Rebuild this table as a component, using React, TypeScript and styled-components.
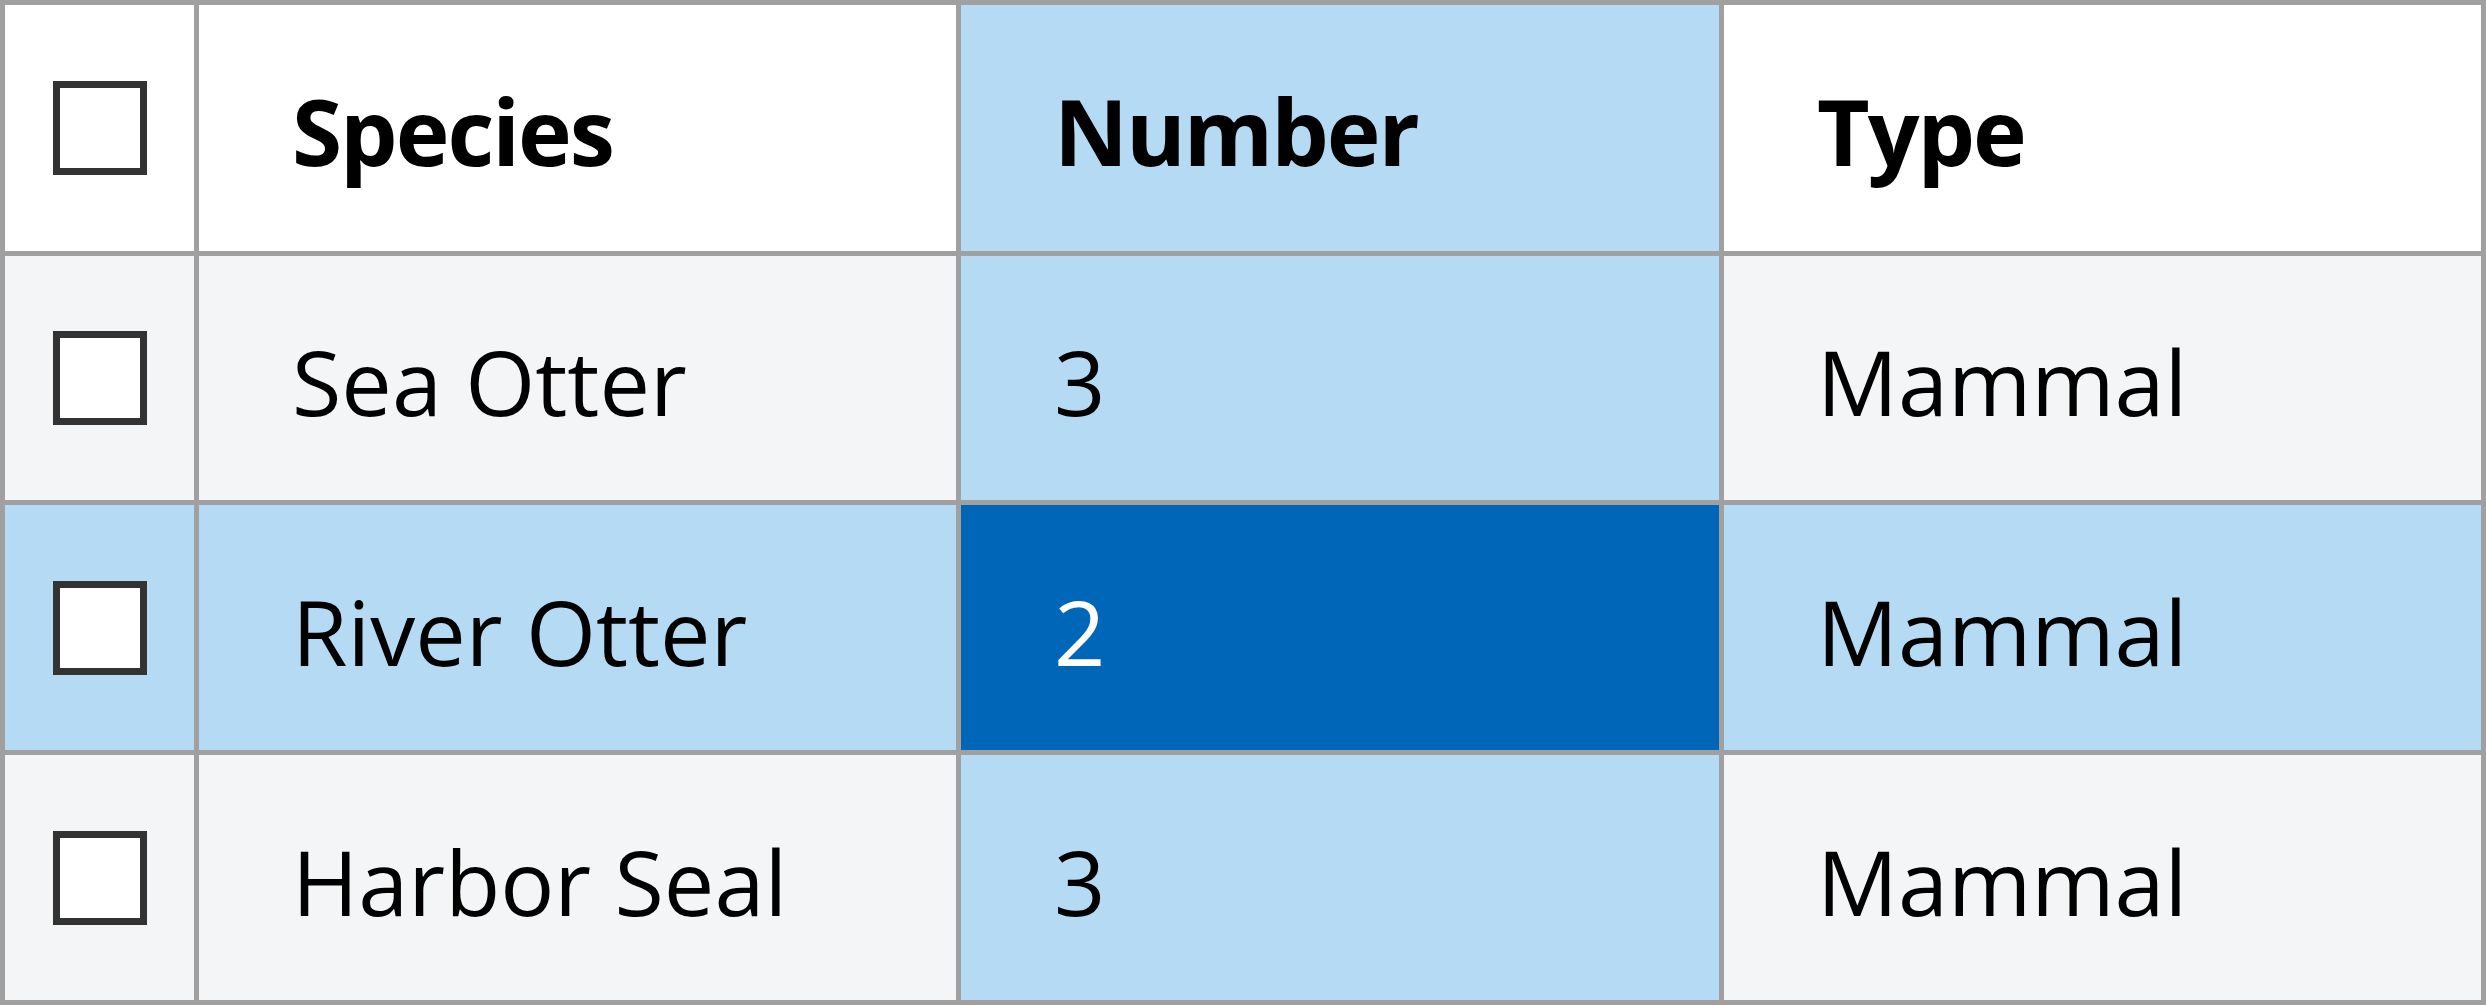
import React from "react";
import styled, { createGlobalStyle } from "styled-components";

const GlobalStyle = createGlobalStyle`
  html, body {
    margin: 0;
    padding: 0;
    background: #ffffff;
  }
  body {
    font-family: "Open Sans", "Noto Sans", "Liberation Sans", sans-serif;
  }
`;

const BORDER = "#a0a0a0";
const ROW_BG = "#f4f5f7";
const SELECT_BG = "#b5daf4";
const ACTIVE_BG = "#0066b8";

const Table = styled.table`
  width: 2486px;
  table-layout: fixed;
  border-collapse: separate;
  border-spacing: 5px;
  background: ${BORDER};
  font-family: "Open Sans", "Noto Sans", "Liberation Sans", sans-serif;
  color: #000;
`;

const Column = styled.col<{ $width?: number }>`
  width: ${(p) => (p.$width ? `${p.$width}px` : "auto")};
`;

const Row = styled.tr<{ $height: number }>`
  height: ${(p) => p.$height}px;
`;

const HeaderCell = styled.th<{ $selected?: boolean }>`
  background: ${(p) => (p.$selected ? SELECT_BG : "#ffffff")};
  text-align: left;
  font-size: 91px;
  font-weight: 700;
  letter-spacing: -2px;
  padding: 6px 0 0 93px;
  vertical-align: middle;
  white-space: nowrap;
`;

const Cell = styled.td<{ $bg: string; $active?: boolean }>`
  background: ${(p) => p.$bg};
  color: ${(p) => (p.$active ? "#ffffff" : "#000000")};
  font-size: 90px;
  font-weight: 400;
  padding: 6px 0 0 93px;
  vertical-align: middle;
  white-space: nowrap;
`;

const CheckCell = styled.td<{ $bg: string }>`
  background: ${(p) => p.$bg};
  padding: 0;
  vertical-align: middle;
  text-align: center;
`;

const HeaderCheckCell = styled.th`
  background: #ffffff;
  padding: 0;
  vertical-align: middle;
  text-align: center;
`;

const Checkbox = styled.span`
  display: block;
  box-sizing: border-box;
  width: 94px;
  height: 94px;
  margin: 0 auto;
  border: 7px solid #333333;
  background: #ffffff;
`;

type Animal = { species: string; number: number; type: string };

const data: Animal[] = [
  { species: "Sea Otter", number: 3, type: "Mammal" },
  { species: "River Otter", number: 2, type: "Mammal" },
  { species: "Harbor Seal", number: 3, type: "Mammal" },
];

const rowHeights = [244, 245, 245];
const SELECTED_ROW = 1;

export default function App() {
  return (
    <>
      <GlobalStyle />
      <Table>
        <colgroup>
          <Column $width={189} />
          <Column $width={757} />
          <Column $width={758} />
          <Column />
        </colgroup>
        <thead>
          <Row $height={246}>
            <HeaderCheckCell>
              <Checkbox />
            </HeaderCheckCell>
            <HeaderCell>Species</HeaderCell>
            <HeaderCell $selected>Number</HeaderCell>
            <HeaderCell>Type</HeaderCell>
          </Row>
        </thead>
        <tbody>
          {data.map((a, i) => {
            const rowSelected = i === SELECTED_ROW;
            const base = rowSelected ? SELECT_BG : ROW_BG;
            return (
              <Row key={a.species} $height={rowHeights[i]}>
                <CheckCell $bg={base}>
                  <Checkbox />
                </CheckCell>
                <Cell $bg={base}>{a.species}</Cell>
                <Cell
                  $bg={rowSelected ? ACTIVE_BG : SELECT_BG}
                  $active={rowSelected}
                >
                  {a.number}
                </Cell>
                <Cell $bg={base}>{a.type}</Cell>
              </Row>
            );
          })}
        </tbody>
      </Table>
    </>
  );
}
